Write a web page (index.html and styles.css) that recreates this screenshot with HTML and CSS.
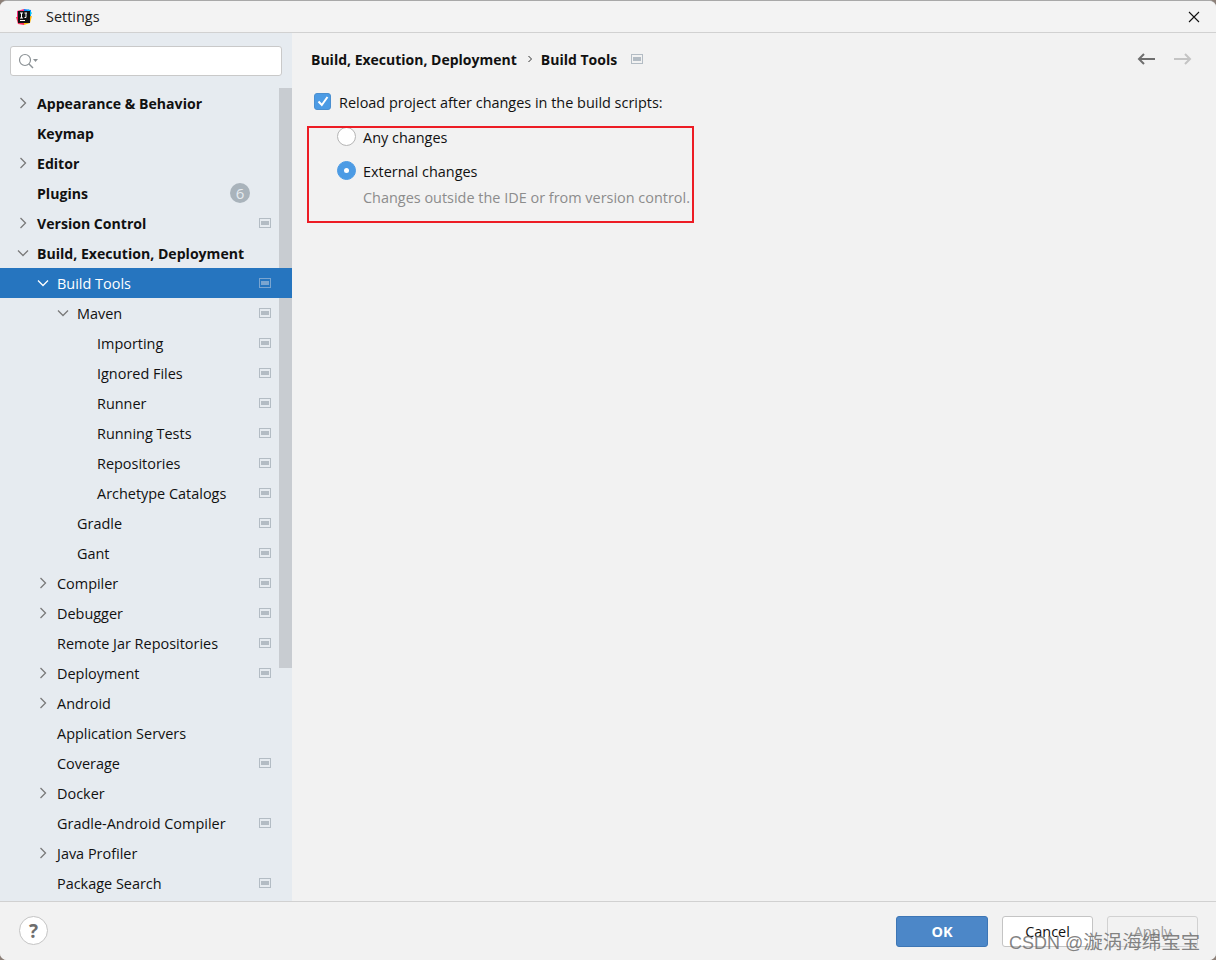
FILE: index.html
```html
<!DOCTYPE html>
<html lang="en">
<head>
<meta charset="utf-8">
<title>Settings</title>
<link rel="stylesheet" href="styles.css">
</head>
<body>
<div class="window">
  <header class="titlebar">
    <svg class="logo" width="18" height="18" viewBox="0 0 18 18">
      <path d="M2 3 L9 1 L9 9 L2 9Z" fill="#f5317f"/>
      <path d="M9 1 L16 2 L16 9 L9 9Z" fill="#087cfa"/>
      <path d="M1 9 L9 9 L9 17 L3 16Z" fill="#fe2857"/>
      <path d="M9 9 L17 8 L15 15 L9 17Z" fill="#fdb60d"/>
      <path d="M13 1 L17 5 L15 8 L12 4Z" fill="#07c3f2"/>
      <rect x="3" y="3" width="12" height="12" fill="#111"/>
      <rect x="5" y="12" width="5" height="1" fill="#fff"/>
      <path d="M5 5 H8 M6.500 5 V10 M5 10 H8 M9.500 5 H12 M11 5 V9.500 H9.500" stroke="#fff" fill="none" stroke-width="1"/>
    </svg>
    <span class="title">Settings</span>
    <svg class="close" width="12" height="12" viewBox="0 0 12 12"><path d="M1 1 L11 11 M11 1 L1 11" stroke="#111" stroke-width="1.1" fill="none"/></svg>
  </header>
  <div class="main">
    <aside class="sidebar">
      <div class="search-wrap">
        <div class="search">
          <svg width="22" height="16" viewBox="0 0 22 16"><circle cx="7" cy="7" r="5.500" fill="none" stroke="#8c9296" stroke-width="1.2"/><path d="M11 11 L15 15" stroke="#8c9296" stroke-width="1.4"/><path d="M15 6 H20 L17.500 9Z" fill="#8c9296"/></svg>
        </div>
      </div>
      <div class="tree">
        <div class="thumb"></div>
        <div class="row bold l0"><svg class="chev" viewBox="0 0 12 12"><path d="M3.500 1 L8.500 6 L3.500 11"/></svg><span class="label">Appearance &amp; Behavior</span></div>
        <div class="row bold l0"><span class="nochev"></span><span class="label">Keymap</span></div>
        <div class="row bold l0"><svg class="chev" viewBox="0 0 12 12"><path d="M3.500 1 L8.500 6 L3.500 11"/></svg><span class="label">Editor</span></div>
        <div class="row bold l0"><span class="nochev"></span><span class="label">Plugins</span><span class="badge">6</span></div>
        <div class="row bold l0"><svg class="chev" viewBox="0 0 12 12"><path d="M3.500 1 L8.500 6 L3.500 11"/></svg><span class="label">Version Control</span><span class="pi"></span></div>
        <div class="row bold l0"><svg class="chev" viewBox="0 0 12 12"><path d="M1 3.500 L6 8.500 L11 3.500"/></svg><span class="label">Build, Execution, Deployment</span></div>
        <div class="row selected l1"><svg class="chev" viewBox="0 0 12 12"><path d="M1 3.500 L6 8.500 L11 3.500"/></svg><span class="label">Build Tools</span><span class="pi"></span></div>
        <div class="row l2"><svg class="chev" viewBox="0 0 12 12"><path d="M1 3.500 L6 8.500 L11 3.500"/></svg><span class="label">Maven</span><span class="pi"></span></div>
        <div class="row l3"><span class="nochev"></span><span class="label">Importing</span><span class="pi"></span></div>
        <div class="row l3"><span class="nochev"></span><span class="label">Ignored Files</span><span class="pi"></span></div>
        <div class="row l3"><span class="nochev"></span><span class="label">Runner</span><span class="pi"></span></div>
        <div class="row l3"><span class="nochev"></span><span class="label">Running Tests</span><span class="pi"></span></div>
        <div class="row l3"><span class="nochev"></span><span class="label">Repositories</span><span class="pi"></span></div>
        <div class="row l3"><span class="nochev"></span><span class="label">Archetype Catalogs</span><span class="pi"></span></div>
        <div class="row l2"><span class="nochev"></span><span class="label">Gradle</span><span class="pi"></span></div>
        <div class="row l2"><span class="nochev"></span><span class="label">Gant</span><span class="pi"></span></div>
        <div class="row l1"><svg class="chev" viewBox="0 0 12 12"><path d="M3.500 1 L8.500 6 L3.500 11"/></svg><span class="label">Compiler</span><span class="pi"></span></div>
        <div class="row l1"><svg class="chev" viewBox="0 0 12 12"><path d="M3.500 1 L8.500 6 L3.500 11"/></svg><span class="label">Debugger</span><span class="pi"></span></div>
        <div class="row l1"><span class="nochev"></span><span class="label">Remote Jar Repositories</span><span class="pi"></span></div>
        <div class="row l1"><svg class="chev" viewBox="0 0 12 12"><path d="M3.500 1 L8.500 6 L3.500 11"/></svg><span class="label">Deployment</span><span class="pi"></span></div>
        <div class="row l1"><svg class="chev" viewBox="0 0 12 12"><path d="M3.500 1 L8.500 6 L3.500 11"/></svg><span class="label">Android</span></div>
        <div class="row l1"><span class="nochev"></span><span class="label">Application Servers</span></div>
        <div class="row l1"><span class="nochev"></span><span class="label">Coverage</span><span class="pi"></span></div>
        <div class="row l1"><svg class="chev" viewBox="0 0 12 12"><path d="M3.500 1 L8.500 6 L3.500 11"/></svg><span class="label">Docker</span></div>
        <div class="row l1"><span class="nochev"></span><span class="label">Gradle-Android Compiler</span><span class="pi"></span></div>
        <div class="row l1"><svg class="chev" viewBox="0 0 12 12"><path d="M3.500 1 L8.500 6 L3.500 11"/></svg><span class="label">Java Profiler</span></div>
        <div class="row l1"><span class="nochev"></span><span class="label">Package Search</span><span class="pi"></span></div>
      </div>
    </aside>
    <section class="content">
      <div class="crumbs">
        <span class="crumb">Build, Execution, Deployment</span>
        <svg class="sep" width="6" height="8" viewBox="0 0 6 8"><path d="M1.500 1 L4.500 4 L1.500 7" fill="none" stroke="#333" stroke-width="1"/></svg>
        <span class="crumb">Build Tools</span>
        <span class="pi crumb-pi"></span>
        <div class="nav">
          <svg width="20" height="14" viewBox="0 0 20 14"><path d="M19 7 H3 M8 2 L3 7 L8 12" fill="none" stroke="#6e6e6e" stroke-width="2"/></svg>
          <svg width="20" height="14" viewBox="0 0 20 14"><path d="M1 7 H17 M12 2 L17 7 L12 12" fill="none" stroke="#c4c4c4" stroke-width="2"/></svg>
        </div>
      </div>
      <div class="check-row">
        <span class="checkbox"><svg width="14" height="14" viewBox="0 0 14 14"><path d="M2.500 7.500 L5.800 11 L11.500 3" fill="none" stroke="#fff" stroke-width="2"/></svg></span>
        <span class="opt-text">Reload project after changes in the build scripts:</span>
      </div>
      <div class="radio-row first"><span class="radio"></span><span class="opt-text">Any changes</span></div>
      <div class="radio-row second"><span class="radio on"></span><span class="opt-text">External changes</span></div>
      <div class="hint">Changes outside the IDE or from version control.</div>
    </section>
  </div>
  <footer class="footer">
    <span class="help">?</span>
    <div class="buttons">
      <span class="btn ok">OK</span>
      <span class="btn cancel">Cancel</span>
      <span class="btn apply">Apply</span>
    </div>
  </footer>
  <div class="redbox"></div>
  <div class="watermark"><span class="wm-latin">CSDN @</span>漩涡海绵宝宝</div>
</div>
</body>
</html>
```
FILE: styles.css
```css
* { box-sizing: border-box; }
html, body { margin: 0; padding: 0; }
body { width: 1216px; height: 960px; background: #8d8078; overflow: hidden; font-family: "Open Sans", "Noto Sans", sans-serif; font-size: 14.45px; color: #111; }
.window { position: relative; width: 1216px; height: 960px; display: flex; flex-direction: column; background: #f2f2f2; border-radius: 7px; overflow: hidden; border-top: 1px solid #a8a8a8; }
.titlebar { height: 32px; flex: none; display: flex; align-items: center; padding: 0 16px 0 15px; background: #f3f3f3; border-bottom: 1px solid #d1d1d1; }
.logo { flex: none; }
.title { margin-left: 13px; font-size: 14.45px; color: #222; }
.close { margin-left: auto; }
.main { flex: 1; display: flex; min-height: 0; }
.sidebar { width: 292px; flex: none; background: #e6ebf0; display: flex; flex-direction: column; }
.search-wrap { height: 55px; flex: none; padding: 13px 10px 0; }
.search { width: 272px; height: 30px; background: #fff; border: 1px solid #c9c9c9; border-radius: 3px; display: flex; align-items: center; padding-left: 7px; }
.tree { position: relative; flex: 1; overflow: hidden; }
.thumb { position: absolute; right: 0; top: 0; width: 13px; height: 580px; background: rgba(0,0,0,0.13); }
.row { height: 30px; display: flex; align-items: center; padding-right: 21px; white-space: nowrap; }
.row.bold { font-weight: 700; font-size: 14.1px; }
.row.l0 { padding-left: 17px; }
.row.l1 { padding-left: 37px; }
.row.l2 { padding-left: 57px; }
.row.l3 { padding-left: 77px; }
.chev { width: 12px; height: 12px; flex: none; margin-right: 8px; }
.chev path { fill: none; stroke: #7a7a7a; stroke-width: 1.3; }
.nochev { width: 12px; flex: none; margin-right: 8px; }
.row.selected { background: #2675bf; color: #fff; position: relative; }
.row.selected .chev path { stroke: #fff; }
.row.selected .pi { border-color: #7aa5d0; }
.row.selected .pi::after { background: #7aa5d0; }
.pi { display: block; margin-left: auto; width: 12px; height: 10px; border: 1px solid #b3bcc4; position: relative; flex: none; }
.pi::after { content: ""; position: absolute; left: 1px; right: 1px; top: 2px; height: 4px; background: #b3bcc4; }
.badge { margin-left: auto; margin-right: 21px; width: 20px; height: 20px; border-radius: 50%; background: #a9b3bb; color: #e6ebf0; font-size: 15px; font-weight: 400; display: flex; align-items: center; justify-content: center; }
.content { flex: 1; padding: 0 19px; position: relative; }
.crumbs { height: 52px; display: flex; align-items: center; font-weight: 700; font-size: 14px; }
.sep { margin: 0 8px 0 10px; }
.crumb-pi { margin-left: 14px; margin-right: 0; }
.nav { margin-left: auto; display: flex; gap: 17px; margin-right: 4px; }
.check-row { display: flex; align-items: center; height: 20px; margin-left: 3px; margin-top: 6px; gap: 8px; }
.opt-text { position: relative; top: 1px; }
.checkbox { width: 17px; height: 17px; background: #4c9be4; border-radius: 3px; display: flex; align-items: center; justify-content: center; border: 1px solid #4a8fd0; }
.radio-row { display: flex; align-items: center; height: 20px; margin-left: 26px; gap: 7px; }
.radio-row.first { margin-top: 15px; }
.radio-row.second { margin-top: 14px; }
.radio { width: 19px; height: 19px; border-radius: 50%; background: #fff; border: 1px solid #b5b5b5; display: block; flex: none; }
.radio.on { background: #4c9be4; border-color: #4c9be4; position: relative; }
.radio.on::after { content: ""; position: absolute; left: 6px; top: 6px; width: 5px; height: 5px; border-radius: 50%; background: #fff; }
.hint { margin-left: 52px; margin-top: 8px; color: #8c8c8c; white-space: nowrap; }
.footer { height: 59px; flex: none; display: flex; align-items: flex-start; background: #f2f2f2; border-top: 1px solid #d1d1d1; padding: 14px 18px 0 19px; }
.help { width: 29px; height: 29px; border-radius: 50%; background: #fff; border: 1px solid #c4c4c4; color: #6e6e6e; font-weight: 700; font-size: 19px; display: flex; align-items: center; justify-content: center; }
.buttons { margin-left: auto; display: flex; gap: 14px; }
.btn { width: 92px; height: 31px; display: flex; align-items: center; justify-content: center; border-radius: 3px; }
.ok { background: #4c87c8; border: 1px solid #3d76b5; color: #fff; font-weight: 700; }
.cancel { background: #fff; border: 1px solid #c4c4c4; width: 91px; }
.apply { background: #f2f2f2; border: 1px solid #d1d1d1; color: #9a9a9a; width: 91px; }
.redbox { position: absolute; left: 307px; top: 125px; width: 387px; height: 97px; border: 2px solid #ed1c24; }
.watermark { position: absolute; left: 1009px; top: 925px; font-family: "Liberation Sans", "Noto Sans CJK SC", sans-serif; font-size: 19.5px; color: rgba(110,110,110,0.85); white-space: nowrap; }
.wm-latin { font-size: 18px; }
```
